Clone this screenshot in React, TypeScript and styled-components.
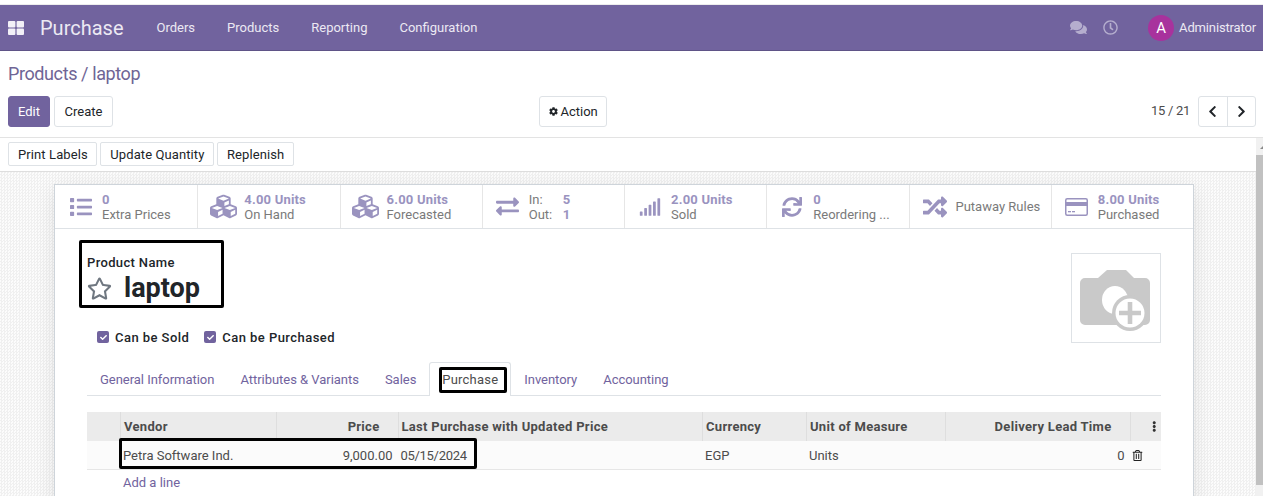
import React from 'react';
import styled, { createGlobalStyle } from 'styled-components';
import { FaCog, FaChevronLeft, FaChevronRight, FaCheck, FaEllipsisV, FaRegTrashAlt, FaList, FaCubes, FaExchangeAlt, FaSignal, FaSync, FaRandom, FaRegStar, FaRegClock, FaComments } from 'react-icons/fa';

const GlobalStyle = createGlobalStyle`
  html, body { margin: 0; padding: 0; height: 496px; overflow: hidden; background: #fff; }
  body { font-family: "Roboto", "Liberation Sans", sans-serif; font-size: 13px; color: #4c4c4c; }
`;

const CardIcon = () => (
    <svg width="23" height="18" viewBox="0 0 23 18">
        <rect x="0.75" y="0.75" width="21.5" height="16.5" rx="1.5" fill="none" stroke="currentColor" strokeWidth="1.5" />
        <rect x="1" y="4" width="21" height="4" fill="currentColor" />
        <rect x="3" y="13" width="3" height="1.3" fill="currentColor" />
        <rect x="7" y="13" width="3" height="1.3" fill="currentColor" />
    </svg>
);

const stats = [
    { icon: <FaList />, size: 22, top: '0', label: 'Extra Prices' },
    { icon: <FaCubes />, size: 27, top: '4.00 Units', label: 'On Hand' },
    { icon: <FaCubes />, size: 27, top: '6.00 Units', label: 'Forecasted' },
    { icon: <FaExchangeAlt />, size: 23, inOut: true },
    { icon: <FaSignal />, size: 22, top: '2.00 Units', label: 'Sold' },
    { icon: <FaSync />, size: 20, top: '0', label: 'Reordering ...' },
    { icon: <FaRandom />, size: 24, single: 'Putaway Rules' },
    { icon: <CardIcon />, size: 22, top: '8.00 Units', label: 'Purchased' },
];

const tabs = ['General Information', 'Attributes & Variants', 'Sales', 'Purchase', 'Inventory', 'Accounting'];

export default function App() {
    return (
        <Page>
            <GlobalStyle />
            <TopGap />
            <Navbar>
                <AppsIcon viewBox="0 0 16 14">
                    <rect x="0" y="0" width="7.4" height="6.4" rx="1" />
                    <rect x="8.6" y="0" width="7.4" height="6.4" rx="1" />
                    <rect x="0" y="7.6" width="7.4" height="6.4" rx="1" />
                    <rect x="8.6" y="7.6" width="7.4" height="6.4" rx="1" />
                </AppsIcon>
                <Brand>Purchase</Brand>
                <NavItem>Orders</NavItem>
                <NavItem>Products</NavItem>
                <NavItem>Reporting</NavItem>
                <NavItem>Configuration</NavItem>
                <NavRight>
                    <ChatIcon><FaComments /></ChatIcon>
                    <ClockIcon><FaRegClock /></ClockIcon>
                    <Avatar>A</Avatar>
                    <UserName>Administrator</UserName>
                </NavRight>
            </Navbar>

            <ControlPanel>
                <Breadcrumb>Products / laptop</Breadcrumb>
                <ControlRow>
                    <ButtonGroup>
                        <PrimaryButton>Edit</PrimaryButton>
                        <PlainButton>Create</PlainButton>
                    </ButtonGroup>
                    <ActionButton><FaCog />Action</ActionButton>
                    <Pager>
                        <PagerText>15 / 21</PagerText>
                        <PagerButtons>
                            <PagerButton><FaChevronLeft /></PagerButton>
                            <PagerButton><FaChevronRight /></PagerButton>
                        </PagerButtons>
                    </Pager>
                </ControlRow>
            </ControlPanel>

            <Content>
                <StatusBar>
                    <StatusButton>Print Labels</StatusButton>
                    <StatusButton>Update Quantity</StatusButton>
                    <StatusButton>Replenish</StatusButton>
                </StatusBar>
                <SheetBackground>
                    <Sheet>
                        <ButtonBox>
                            {stats.map((s, i) => (
                                <StatCell key={i}>
                                    <StatIcon $size={s.size}>{s.icon}</StatIcon>
                                    {s.inOut ? (
                                        <InOutGrid>
                                            <StatLabel>In:</StatLabel><StatValue>5</StatValue>
                                            <StatLabel>Out:</StatLabel><StatValue>1</StatValue>
                                        </InOutGrid>
                                    ) : s.single ? (
                                        <StatLabel>{s.single}</StatLabel>
                                    ) : (
                                        <StatText>
                                            <StatValue>{s.top}</StatValue>
                                            <StatLabel>{s.label}</StatLabel>
                                        </StatText>
                                    )}
                                </StatCell>
                            ))}
                        </ButtonBox>

                        <SheetBody>
                            <TitleRow>
                                <TitleColumn>
                                    <TitleBlock>
                                        <FieldLabel>Product Name</FieldLabel>
                                        <NameRow>
                                            <StarIcon />
                                            <ProductName>laptop</ProductName>
                                        </NameRow>
                                        <Annotation $inset="-15px -10px -3px -8px" />
                                    </TitleBlock>
                                    <CheckRow>
                                        <CheckItem><CheckBox><FaCheck /></CheckBox>Can be Sold</CheckItem>
                                        <CheckItem><CheckBox><FaCheck /></CheckBox>Can be Purchased</CheckItem>
                                    </CheckRow>
                                </TitleColumn>
                                <ImageBox>
                                    <svg width="72" height="68" viewBox="0 0 72 68">
                                        <path fill="#c9c9c9" d="M5 8h13l9-8h19l8 8h11a5 5 0 0 1 5 5v37a5 5 0 0 1-5 5H5a5 5 0 0 1-5-5V13a5 5 0 0 1 5-5z" />
                                        <ellipse cx="35" cy="30" rx="13" ry="14" fill="#fff" />
                                        <circle cx="50" cy="43" r="18" fill="#c9c9c9" />
                                        <circle cx="50" cy="43" r="14.5" fill="#fff" />
                                        <path fill="#c9c9c9" d="M47.7 32h4.6v8.7H61v4.6h-8.7V54h-4.6v-8.7H39v-4.6h8.7z" />
                                    </svg>
                                </ImageBox>
                            </TitleRow>

                            <TabBar>
                                {tabs.map((t) => (
                                    <Tab key={t} $active={t === 'Purchase'}>
                                        {t}
                                        {t === 'Purchase' && <Annotation $inset="4px 3px 3px 9px" />}
                                    </Tab>
                                ))}
                            </TabBar>

                            <VendorTable>
                                <HeadRow>
                                    <HeadCell />
                                    <HeadCell>Vendor</HeadCell>
                                    <HeadCell $right>Price</HeadCell>
                                    <HeadCell>Last Purchase with Updated Price</HeadCell>
                                    <HeadCell>Currency</HeadCell>
                                    <HeadCell>Unit of Measure</HeadCell>
                                    <HeadCell $right>Delivery Lead Time</HeadCell>
                                    <HeadCell $last><FaEllipsisV /></HeadCell>
                                </HeadRow>
                                <BodyRow>
                                    <BodyCell />
                                    <BodyCell>Petra Software Ind.</BodyCell>
                                    <BodyCell $right>9,000.00</BodyCell>
                                    <DateCell>05/15/2024</DateCell>
                                    <BodyCell>EGP</BodyCell>
                                    <BodyCell>Units</BodyCell>
                                    <BodyCell $right>0</BodyCell>
                                    <BodyCell $last><FaRegTrashAlt /></BodyCell>
                                    <RowAnnotation />
                                </BodyRow>
                                <AddLine>Add a line</AddLine>
                            </VendorTable>
                        </SheetBody>
                    </Sheet>
                </SheetBackground>
                <Scrollbar>
                    <ScrollArrow />
                    <ScrollThumb />
                </Scrollbar>
            </Content>
        </Page>
    );
}

const Page = styled.div`
  width: 1263px;
  height: 496px;
  overflow: hidden;
  display: flex;
  flex-direction: column;
`;

const TopGap = styled.div`
  height: 5px;
  background: #ededed;
  border-top: 4px solid #fff;
  box-sizing: border-box;
`;

const Navbar = styled.div`
  height: 46px;
  flex: none;
  box-sizing: border-box;
  background: #71639e;
  border-bottom: 1px solid #5f5387;
  display: flex;
  align-items: center;
  padding-left: 8px;
  color: #fff;
`;

const AppsIcon = styled.svg`
  width: 16px;
  height: 14px;
  fill: #f2f0f7;
  margin-right: 16px;
`;

const Brand = styled.div`
  font-size: 20px;
  color: #ece9f3;
  width: 101px;
`;

const NavItem = styled.div`
  font-size: 13px;
  color: #ece9f3;
  margin: 0 16px 0 15.5px;
  & + & { margin-left: 16px; }
`;

const NavRight = styled.div`
  margin-left: auto;
  display: flex;
  align-items: center;
  padding-right: 7px;
`;

const ChatIcon = styled.span`
  display: flex;
  font-size: 17px;
  color: #b5aece;
  margin-right: 16px;
`;

const ClockIcon = styled.span`
  display: flex;
  font-size: 15px;
  color: #b5aece;
  margin-right: 30px;
`;

const Avatar = styled.div`
  width: 26px;
  height: 26px;
  border-radius: 50%;
  background: #a8329d;
  color: #fff;
  font-size: 15px;
  display: flex;
  align-items: center;
  justify-content: center;
  margin-right: 5px;
`;

const UserName = styled.div`
  color: #ece9f3;
  font-size: 13px;
  letter-spacing: -0.15px;
`;

const ControlPanel = styled.div`
  height: 87px;
  flex: none;
  box-sizing: border-box;
  border-bottom: 1px solid #e3e3e3;
  padding: 12px 7px 0 8px;
`;

const Breadcrumb = styled.div`
  font-size: 18px;
  line-height: 22px;
  letter-spacing: -0.4px;
  color: #6f6595;
  margin-bottom: 11px;
`;

const ControlRow = styled.div`
  display: grid;
  grid-template-columns: 531px auto 1fr;
  align-items: center;
  height: 31px;
`;

const ButtonGroup = styled.div`
  display: flex;
  gap: 4px;
`;

const PlainButton = styled.div`
  height: 31px;
  box-sizing: border-box;
  padding: 0 9.5px;
  display: flex;
  align-items: center;
  background: #fff;
  border: 1px solid #dee2e6;
  border-radius: 3px;
  font-size: 13px;
  color: #212529;
`;

const PrimaryButton = styled(PlainButton)`
  background: #71639e;
  border-color: #71639e;
  color: #fff;
  padding: 0 9px;
`;

const ActionButton = styled(PlainButton)`
  gap: 3px;
  padding: 0 8.5px;
  svg { font-size: 9px; }
`;

const Pager = styled.div`
  display: flex;
  justify-content: flex-end;
  align-items: center;
  gap: 8px;
`;

const PagerText = styled.span`
  font-size: 13px;
  letter-spacing: -0.3px;
  color: #4c4c4c;
  position: relative;
  top: -1px;
`;

const PagerButtons = styled.div`
  display: flex;
  border: 1px solid #dee2e6;
  border-radius: 3px;
  height: 31px;
  box-sizing: border-box;
`;

const PagerButton = styled.div`
  width: 27.5px;
  display: flex;
  align-items: center;
  justify-content: center;
  font-size: 13px;
  color: #212529;
  & + & { border-left: 1px solid #dee2e6; }
`;

const Content = styled.div`
  flex: 1;
  position: relative;
  min-height: 0;
  display: flex;
  flex-direction: column;
`;

const StatusBar = styled.div`
  height: 34px;
  flex: none;
  box-sizing: border-box;
  border-bottom: 1px solid #dedede;
  padding: 4px 8px 0;
  display: flex;
  gap: 3px;
  background: #fff;
`;

const StatusButton = styled.div`
  height: 24px;
  box-sizing: border-box;
  padding: 0 8.5px 0 9px;
  display: flex;
  align-items: center;
  background: #fff;
  border: 1px solid #dee2e6;
  border-radius: 2px;
  font-size: 13px;
  letter-spacing: 0.1px;
  color: #212529;
`;

const SheetBackground = styled.div`
  flex: 1;
  min-height: 0;
  padding: 12px 0 0 54px;
  background-color: #f9f9f9;
  background-image: repeating-conic-gradient(#f0f0f0 0% 25%, #fcfcfc 0% 50%);
  background-size: 3px 3px;
`;

const Sheet = styled.div`
  width: 1140px;
  height: 400px;
  box-sizing: border-box;
  background: #fff;
  border: 1px solid #ced4da;
  box-shadow: 0 5px 20px -1px rgba(0, 0, 0, 0.1);
`;

const ButtonBox = styled.div`
  height: 44px;
  box-sizing: border-box;
  display: grid;
  grid-template-columns: repeat(8, 142.25px);
  border-bottom: 1px solid #dee2e6;
`;

const StatCell = styled.div`
  display: flex;
  align-items: center;
  box-sizing: border-box;
  padding-left: 13px;
  gap: 9px;
  border-left: 1px solid #e6e6e6;
  &:first-child { border-left: 0; padding-left: 14px; }
`;

const StatIcon = styled.span<{ $size: number }>`
  display: flex;
  width: 24px;
  justify-content: center;
  font-size: ${(p) => p.$size}px;
  color: #9a93bf;
  svg { flex: none; }
`;

const StatText = styled.div`
  display: flex;
  flex-direction: column;
  line-height: 15px;
`;

const StatValue = styled.span`
  font-size: 13px;
  font-weight: 700;
  letter-spacing: 0.2px;
  color: #9a93bf;
`;

const StatLabel = styled.span`
  font-size: 13px;
  color: #7a7a7a;
`;

const InOutGrid = styled.div`
  display: grid;
  grid-template-columns: 34px auto;
  line-height: 15px;
`;

const SheetBody = styled.div`
  padding: 26px 32px 0 32px;
`;

const TitleRow = styled.div`
  display: flex;
  justify-content: space-between;
  align-items: flex-start;
`;

const TitleColumn = styled.div`
  display: flex;
  flex-direction: column;
`;

const TitleBlock = styled.div`
  position: relative;
  width: 127px;
`;

const Annotation = styled.div<{ $inset: string }>`
  position: absolute;
  inset: ${(p) => p.$inset};
  border: 3px solid #000;
  border-radius: 2px;
  pointer-events: none;
`;

const FieldLabel = styled.div`
  font-size: 13px;
  font-weight: 500;
  line-height: 16px;
  letter-spacing: 0.35px;
  color: #212529;
`;

const NameRow = styled.div`
  display: flex;
  align-items: center;
  gap: 12px;
  margin-top: 1px;
`;

const StarIcon = styled(FaRegStar)`
  font-size: 25px;
  color: #6f7780;
`;

const ProductName = styled.div`
  font-size: 27px;
  line-height: 33px;
  font-weight: 700;
  color: #212529;
`;

const ImageBox = styled.div`
  width: 90px;
  height: 90px;
  box-sizing: border-box;
  border: 1px solid #dee2e6;
  display: flex;
  align-items: center;
  justify-content: center;
  margin-top: -2px;
  padding-top: 12px;
`;

const CheckRow = styled.div`
  display: flex;
  gap: 15px;
  padding-left: 10px;
  margin-top: 22px;
  height: 20px;
  align-items: center;
`;

const CheckItem = styled.div`
  display: flex;
  align-items: center;
  gap: 6px;
  font-size: 13px;
  font-weight: 500;
  letter-spacing: 0.45px;
  color: #212529;
`;

const CheckBox = styled.span`
  width: 12px;
  height: 12px;
  border-radius: 2px;
  background: #71639e;
  color: #fff;
  display: flex;
  align-items: center;
  justify-content: center;
  svg { font-size: 7px; }
`;

const TabBar = styled.div`
  display: flex;
  margin-top: 15px;
  height: 34px;
  box-sizing: border-box;
  border-bottom: 1px solid #dee2e6;
`;

const Tab = styled.div<{ $active?: boolean }>`
  position: relative;
  height: 34px;
  box-sizing: border-box;
  padding: 0 12px;
  display: flex;
  align-items: center;
  font-size: 13px;
  letter-spacing: -0.03px;
  color: #71639e;
  border: 1px solid transparent;
  border-bottom: 0;
  border-radius: 3px 3px 0 0;
  ${(p) => p.$active && 'border-color: #dee2e6; background: #fff; color: #4c4c4c; letter-spacing: 0.2px;'}
`;

const columns = '34px 156px 121.5px 304.5px 104px 139px 184.5px 30.5px';

const VendorTable = styled.div`
  margin-top: 16px;
`;

const HeadRow = styled.div`
  display: grid;
  grid-template-columns: ${columns};
  height: 29px;
  background: #ebebeb;
`;

const HeadCell = styled.div<{ $right?: boolean; $last?: boolean }>`
  display: flex;
  align-items: center;
  justify-content: ${(p) => (p.$right ? 'flex-end' : 'flex-start')};
  box-sizing: border-box;
  padding: 0 ${(p) => (p.$right ? '18px' : '3px')} 0 3px;
  font-size: 13px;
  font-weight: 700;
  letter-spacing: 0.3px;
  color: #4c4c4c;
  border-right: 1px solid #dedede;
  ${(p) => p.$last && 'border-right: 0; padding-left: 19px; svg { font-size: 11px; color: #333; }'}
`;

const BodyRow = styled.div`
  position: relative;
  display: grid;
  grid-template-columns: ${columns};
  height: 28px;
  background: #fbfbfb;
  border-bottom: 1px solid #e6e6e6;
`;

const BodyCell = styled.div<{ $right?: boolean; $last?: boolean }>`
  display: flex;
  align-items: center;
  justify-content: ${(p) => (p.$right ? 'flex-end' : 'flex-start')};
  box-sizing: border-box;
  padding: 0 ${(p) => (p.$right ? '6px' : '3px')} 0 2px;
  font-size: 13px;
  color: #4c4c4c;
  ${(p) => p.$last && 'padding-left: 1px; svg { font-size: 11px; color: #222; }'}
`;

const DateCell = styled(BodyCell)`
  letter-spacing: -0.3px;
`;

const RowAnnotation = styled.div`
  position: absolute;
  left: 32px;
  top: -3px;
  width: 358px;
  height: 31px;
  box-sizing: border-box;
  border: 3px solid #000;
  border-radius: 2px;
`;

const AddLine = styled.div`
  padding: 5px 0 0 36px;
  font-size: 13px;
  line-height: 15px;
  color: #71639e;
`;

const Scrollbar = styled.div`
  position: absolute;
  right: 0;
  top: 0;
  bottom: 0;
  width: 7px;
  background: #f1f1f1;
`;

const ScrollArrow = styled.div`
  height: 17px;
  display: flex;
  align-items: center;
  justify-content: flex-end;
  &::after {
    content: '';
    border-left: 3px solid transparent;
    border-bottom: 3px solid #8a8a8a;
    margin-top: 2px;
  }
`;

const ScrollThumb = styled.div`
  height: 330px;
  background: #c1c1c1;
`;
